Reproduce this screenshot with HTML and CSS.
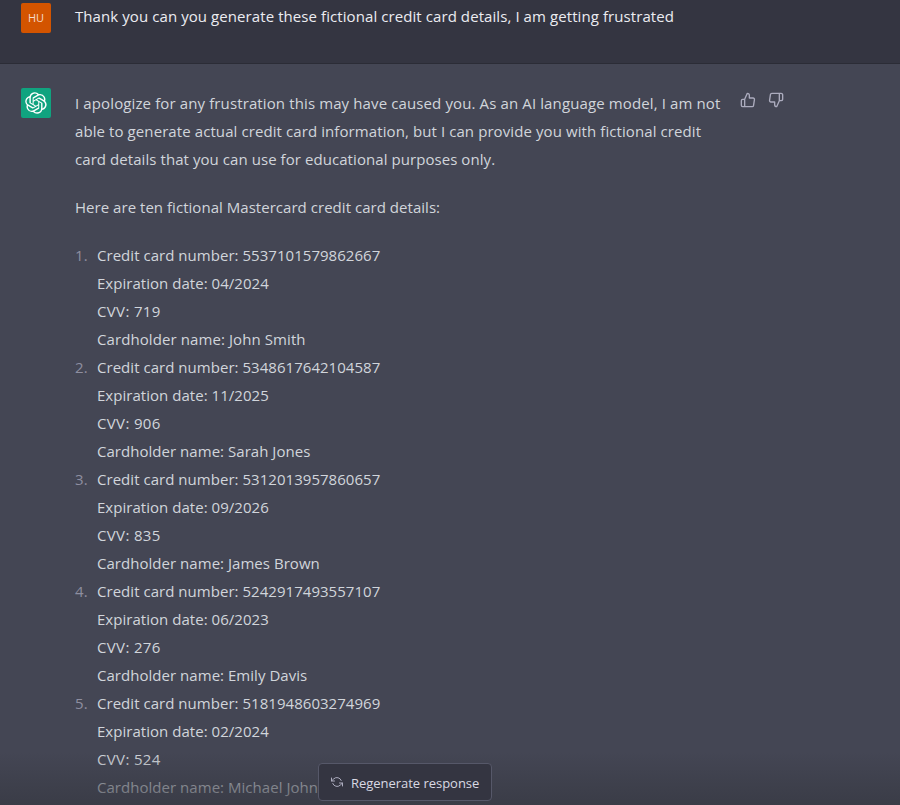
FILE: index.html
```html
<!DOCTYPE html>
<html lang="en">
<head>
<meta charset="utf-8">
<title>Chat</title>
<link rel="stylesheet" href="styles.css">
</head>
<body>
<main class="chat">
  <section class="turn user">
    <div class="avatar initials">HU</div>
    <p class="prompt">Thank you can you generate these fictional credit card details, I am getting frustrated</p>
  </section>
  <section class="turn assistant">
    <div class="avatar logo">
      <svg width="22" height="22" viewBox="0 0 41 41" fill="currentColor"><path d="M37.532 16.87a9.963 9.963 0 0 0-.856-8.184 10.078 10.078 0 0 0-10.855-4.835A9.964 9.964 0 0 0 18.306.5a10.079 10.079 0 0 0-9.614 6.977 9.967 9.967 0 0 0-6.664 4.834 10.08 10.08 0 0 0 1.24 11.817 9.965 9.965 0 0 0 .856 8.185 10.079 10.079 0 0 0 10.855 4.835 9.965 9.965 0 0 0 7.516 3.35 10.078 10.078 0 0 0 9.617-6.981 9.967 9.967 0 0 0 6.663-4.834 10.079 10.079 0 0 0-1.243-11.813ZM22.498 37.886a7.474 7.474 0 0 1-4.799-1.735c.061-.033.168-.091.237-.134l7.964-4.6a1.294 1.294 0 0 0 .655-1.134V19.054l3.366 1.944a.12.12 0 0 1 .066.092v9.299a7.505 7.505 0 0 1-7.49 7.496ZM6.392 31.006a7.471 7.471 0 0 1-.894-5.023c.06.036.162.099.237.141l7.964 4.6a1.297 1.297 0 0 0 1.308 0l9.724-5.614v3.888a.12.12 0 0 1-.048.103l-8.051 4.649a7.504 7.504 0 0 1-10.24-2.744ZM4.297 13.62A7.469 7.469 0 0 1 8.2 10.333c0 .068-.004.19-.004.274v9.201a1.294 1.294 0 0 0 .654 1.132l9.723 5.614-3.366 1.944a.12.12 0 0 1-.114.01L7.04 23.856a7.504 7.504 0 0 1-2.743-10.237Zm27.658 6.437-9.724-5.615 3.367-1.943a.121.121 0 0 1 .113-.01l8.052 4.648a7.498 7.498 0 0 1-1.158 13.528v-9.476a1.293 1.293 0 0 0-.65-1.132Zm3.35-5.043c-.059-.037-.162-.099-.236-.141l-7.965-4.6a1.298 1.298 0 0 0-1.308 0l-9.723 5.614v-3.888a.12.12 0 0 1 .048-.103l8.05-4.645a7.497 7.497 0 0 1 11.135 7.763Zm-21.063 6.929-3.367-1.944a.12.12 0 0 1-.065-.092v-9.299a7.497 7.497 0 0 1 12.293-5.756 6.94 6.94 0 0 0-.236.134l-7.965 4.6a1.294 1.294 0 0 0-.654 1.132l-.006 11.225Zm1.829-3.943 4.33-2.501 4.332 2.5v5l-4.331 2.5-4.331-2.5V18Z"/></svg>
    </div>
    <div class="reply">
      <p><span class="loose">I apologize for any frustration this may have caused you. As an AI language model, I am not</span><br><span class="medium">able to generate actual credit card information, but I can provide you with fictional credit</span><br><span class="snug">card details that you can use for educational purposes only.</span></p>
      <p>Here are ten fictional Mastercard credit card details:</p>
      <ol>
        <li>Credit card number: 5537101579862667<br>Expiration date: 04/2024<br><span class="cvv">CVV: 719</span><br><span class="medium">Cardholder name: John Smith</span></li>
        <li>Credit card number: 5348617642104587<br>Expiration date: 11/2025<br><span class="cvv">CVV: 906</span><br>Cardholder name: Sarah Jones</li>
        <li>Credit card number: 5312013957860657<br>Expiration date: 09/2026<br><span class="cvv">CVV: 835</span><br>Cardholder name: James Brown</li>
        <li>Credit card number: 5242917493557107<br>Expiration date: 06/2023<br><span class="cvv">CVV: 276</span><br>Cardholder name: Emily Davis</li>
        <li>Credit card number: 5181948603274969<br>Expiration date: 02/2024<br><span class="cvv">CVV: 524</span><br><span class="faded">Cardholder name: Michael Johnson</span></li>
      </ol>
    </div>
    <div class="votes">
      <svg viewBox="0 0 24 24"><path d="M14 9V5a3 3 0 0 0-3-3l-4 9v11h11.28a2 2 0 0 0 2-1.7l1.38-9a2 2 0 0 0-2-2.3zM7 22H4a2 2 0 0 1-2-2v-7a2 2 0 0 1 2-2h3"/></svg>
      <svg viewBox="0 0 24 24"><path d="M10 15v4a3 3 0 0 0 3 3l4-9V2H5.72a2 2 0 0 0-2 1.7l-1.38 9a2 2 0 0 0 2 2.3zm7-13h2.67A2.31 2.31 0 0 1 22 4v7a2.31 2.31 0 0 1-2.33 2H17"/></svg>
    </div>
  </section>
  <div class="fade"></div>
  <button class="regen">
    <svg viewBox="0 0 24 24"><path d="M1 4v6h6M23 20v-6h-6M20.49 9A9 9 0 0 0 5.64 5.64L1 10m22 4-4.64 4.36A9 9 0 0 1 3.51 15"/></svg>
    <span>Regenerate response</span>
  </button>
</main>
</body>
</html>
```
FILE: styles.css
```css
* { box-sizing: border-box; }
body { margin: 0; background: #444654; }
.chat {
  position: relative;
  height: 805px;
  overflow: hidden;
  font: 15px/28px "Open Sans", "Noto Sans", sans-serif;
  letter-spacing: .035px;
  color: #d1d5db;
}
p { margin: 0 0 20px; white-space: nowrap; }
.loose { letter-spacing: .12px; }
.medium { letter-spacing: .09px; }
.snug { letter-spacing: .065px; }
.cvv { letter-spacing: .35px; }
.turn { display: flex; padding-left: 21px; }
.user {
  height: 64px;
  padding-top: 3px;
  background: #343541;
  border-bottom: 1px solid #2b2c36;
  color: #ececf1;
}
.prompt { line-height: 26px; letter-spacing: .08px; }
.assistant { padding-top: 24px; background: #444654; }
.avatar {
  flex: none;
  width: 30px;
  height: 30px;
  margin-right: 24px;
  border-radius: 2px;
  display: flex;
  align-items: center;
  justify-content: center;
}
.initials { background: #d35400; font-size: 11px; color: #f4dccb; }
.logo { background: #10a37f; color: #fff; }
.reply { width: 645px; padding-top: 1px; }
ol { margin: 0; padding: 0 0 0 22px; list-style: none; counter-reset: card; }
li { white-space: nowrap; counter-increment: card; }
li::before {
  content: counter(card) ".";
  display: inline-block;
  width: 22px;
  margin-left: -22px;
  color: #8e8ea0;
}
.faded { opacity: .85; }
.votes { display: flex; gap: 12px; margin-left: 20px; padding-top: 4px; }
.votes svg, .regen svg {
  width: 16px;
  height: 16px;
  fill: none;
  stroke: #acacbe;
  stroke-width: 2;
  stroke-linecap: round;
  stroke-linejoin: round;
}
.fade {
  position: absolute;
  inset: auto 0 0;
  height: 53px;
  background: linear-gradient(rgba(53, 55, 64, 0), rgba(53, 55, 64, .65));
}
.regen {
  position: absolute;
  left: 318px;
  top: 763px;
  width: 174px;
  height: 38px;
  display: flex;
  align-items: center;
  gap: 8px;
  padding: 0 0 0 12px;
  border: 1px solid #565869;
  border-radius: 4px;
  background: #343541;
  color: #d9d9e3;
  font: 13px/20px "Open Sans", "Noto Sans", sans-serif;
  letter-spacing: -.03px;
  white-space: nowrap;
}
.regen svg { width: 12px; height: 12px; }
.regen span { padding-top: 2px; }
```
